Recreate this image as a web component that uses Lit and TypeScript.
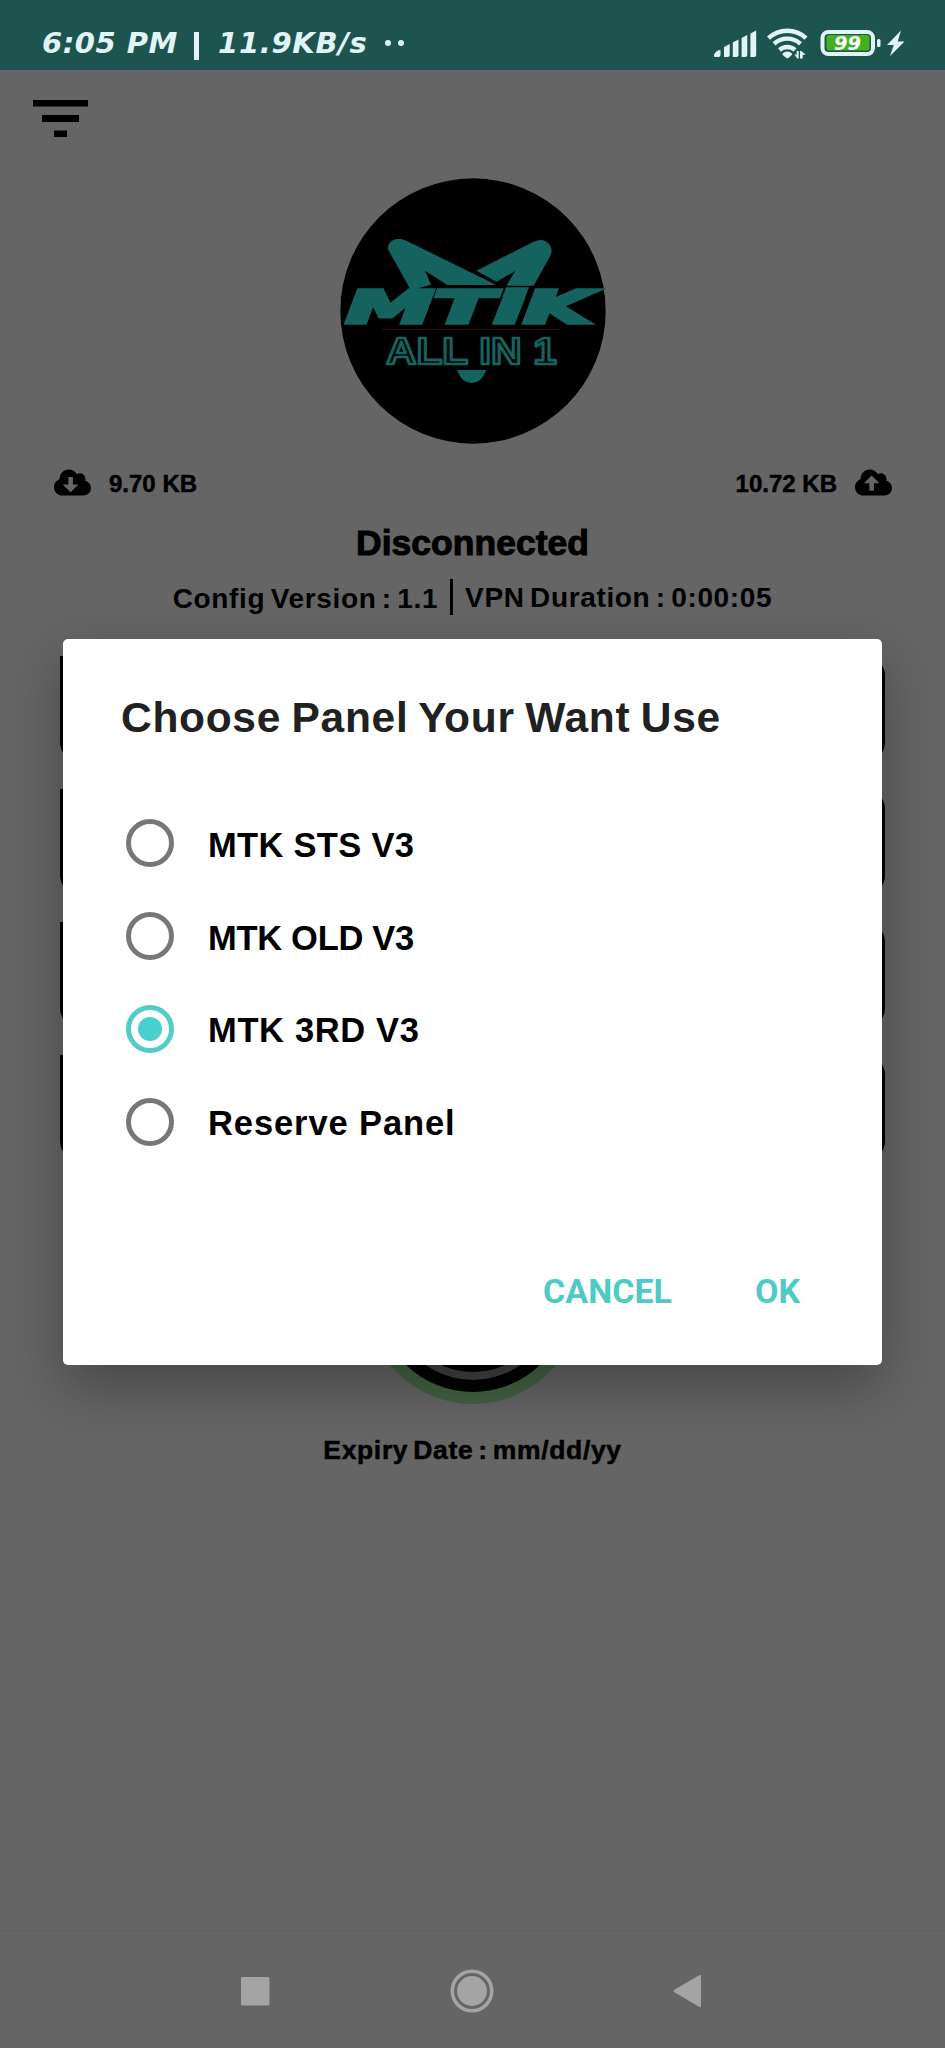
import { LitElement, css, html, svg } from 'lit';
import { customElement, property, state } from 'lit/decorators.js';
import { classMap } from 'lit/directives/class-map.js';

/**
 * Phone status bar.
 */
@customElement('status-bar')
export class StatusBar extends LitElement {
  @property() time = '';
  @property() speed = '';
  @property({ type: Number }) battery = 0;

  render() {
    return html`
      <span class="time">${this.time}</span>
      <span class="bar"></span>
      <span class="speed">${this.speed}</span>
      <span class="dot"></span>
      <span class="dot"></span>
      <svg class="icons" width="195" height="34" viewBox="0 0 195 34">
        <!-- signal -->
        <path
          d="M4 31v-2q2-5 6.500-5v5q0 2-2 2zM14 31V21l5.700-3v11q0 2-2 2zM22.800 31V16.500l5.700-3V29q0 2-2 2zM31.600 31V12l5.700-3v20q0 2-2 2zM40.400 31V7.500l5.800-3V29q0 2-2 2z"
        />
        <!-- wifi -->
        <g class="arcs">
          <path d="M58.500 12.200a27.500 27.500 0 0 1 37.500 0" />
          <path d="M64 17.800a19.500 19.500 0 0 1 26.500 0" />
          <path d="M69.500 24a11.500 11.500 0 0 1 15.500 0" />
        </g>
        <path d="M72.500 27.500q4.800-4 9.600 0 .500 1.500-4.800 5-5.300-3.500-4.800-5z" />
        <path
          d="M84.500 28.500h2.200V25h2v7.600h-1.500zM90 32.500v-7.600h1.500l4.200 3.800h-3v3.800z"
        />
        <!-- battery -->
        <rect class="case" x="112.500" y="6" width="50.500" height="22" rx="6" />
        <rect class="charge" x="116.500" y="9" width="43" height="15.500" rx="2.500" />
        <text
          class="level"
          x="124"
          y="23.500"
          textLength="27"
          lengthAdjust="spacingAndGlyphs"
        >${this.battery}</text>
        <rect x="167" y="13" width="3.500" height="8" rx="1.500" />
        <path d="M191 4.500L177 19h6.800L180 30l14.500-14.500h-6.800z" />
      </svg>
    `;
  }

  static styles = css`
    :host {
      display: flex;
      align-items: center;
      box-sizing: border-box;
      height: 70px;
      padding: 16px 41px 0 42px;
      background: #1e5450;
      color: #e2f5f6;
      font: italic bold 29px/34px 'DejaVu Sans', sans-serif;
      white-space: nowrap;
    }

    .time {
      width: 152px;
      letter-spacing: 0.5px;
    }

    .bar {
      width: 5px;
      height: 28px;
      margin: 6px 19px 0 0;
      background: currentColor;
    }

    .speed {
      width: 167px;
      letter-spacing: 0.7px;
    }

    .dot {
      width: 6px;
      height: 6px;
      margin-right: 7px;
      border-radius: 50%;
      background: currentColor;
    }

    .icons {
      flex: none;
      margin-left: auto;
      margin-right: -1px;
      fill: #e2f5f6;
    }

    .arcs {
      fill: none;
      stroke: #e2f5f6;
      stroke-width: 4.4;
    }

    .case {
      fill: none;
      stroke: #e2f5f6;
      stroke-width: 4;
    }

    .charge {
      fill: #43b11c;
    }

    .level {
      fill: #fff;
      font: italic bold 19px 'DejaVu Sans', sans-serif;
    }
  `;
}

/**
 * Round app logo.
 */
@customElement('app-logo')
export class AppLogo extends LitElement {
  render() {
    return html`
      <svg width="266" height="266" viewBox="28 24 798 798">
        <circle cx="427" cy="423" r="398" />
        <g class="fox">
          <path
            d="M172 238q-2-28 31-32 12 0 24 6l270 133H350l-67-43 18 42-34 10-22 14z"
          />
          <path
            d="M437 302l172-87q32-14 50 12 8 14 0 30l-50 90h-82l27-44-56 32z"
          />
          <path d="M379 600h88q-14 39-44 39t-44-39z" />
        </g>
        <text class="name" x="46" y="460" textLength="738" lengthAdjust="spacingAndGlyphs">
          MTiK
        </text>
        <path class="rule" d="M155 478H688" />
        <text class="sub" x="166" y="581" textLength="512" lengthAdjust="spacingAndGlyphs">
          ALL IN 1
        </text>
      </svg>
    `;
  }

  static styles = css`
    :host,
    svg {
      display: block;
    }

    .fox {
      fill: #14635f;
    }

    .name {
      fill: #14635f;
      stroke: #14635f;
      stroke-width: 11;
      font: italic bold 133px 'DejaVu Sans', sans-serif;
    }

    .rule {
      stroke: #35110e;
      stroke-width: 3;
    }

    .sub {
      fill: #000;
      stroke: #14635f;
      stroke-width: 8;
      stroke-linejoin: round;
      font: bold 112px 'Liberation Sans', sans-serif;
    }
  `;
}

const cloud =
  'M537.600 226.600c4.100-10.700 6.400-22.400 6.400-34.600 0-53-43-96-96-96-19.700 0-38.100 6-53.300 16.200C367 64.200 315.300 32 256 32c-88.400 0-160 71.600-160 160 0 2.700.1 5.400.2 8.100C40.200 219.800 0 273.200 0 336c0 79.500 64.500 144 144 144h368c70.700 0 128-57.300 128-128 0-61.900-44-113.600-102.400-125.400z';

const arrows = {
  down: svg`<path class="arrow" d="M248 160h80v132h96L288 424 152 292h96z" />`,
  up: svg`<path class="arrow" d="M248 400h80V268h96L288 136 152 268h96z" />`,
};

@customElement('app-root')
export class AppRoot extends LitElement {
  @state() private _selected = 2;

  // Letter spacing in px goes with each label.
  private _panels = [
    { label: 'MTK STS V3', spacing: 0.3 },
    { label: 'MTK OLD V3', spacing: -0.3 },
    { label: 'MTK 3RD V3', spacing: 0.65 },
    { label: 'Reserve Panel', spacing: 0.9 },
  ];

  // Cloud icon for the traffic counters.
  private _cloud(direction: 'down' | 'up') {
    return html`
      <svg class="cloud" width="37" height="27" viewBox="0 32 640 448">
        <path d=${cloud} />
        ${arrows[direction]}
      </svg>
    `;
  }

  private _renderDialog() {
    return html`
      <div class="dialog" role="dialog">
        <h1 class="title">Choose Panel Your Want Use</h1>
        <div class="options">
          ${this._panels.map(
            (panel, i) => html`
              <div class="option" @click=${() => (this._selected = i)}>
                <span
                  class=${classMap({ radio: true, checked: i === this._selected })}
                ></span>
                <span style="letter-spacing: ${panel.spacing}px">${panel.label}</span>
              </div>
            `,
          )}
        </div>
        <div class="actions">
          <span>CANCEL</span>
          <span>OK</span>
        </div>
      </div>
    `;
  }

  render() {
    return html`
      <status-bar time="6:05 PM" speed="11.9KB/s" battery="99"></status-bar>
      <main class="content">
        <svg class="menu" width="55" height="38" viewBox="0 0 55 38">
          <path d="M0 0h55v6.500H0zM9 15h37v7H9zM21 30.500h13V37H21z" />
        </svg>
        <app-logo class="logo"></app-logo>
        <div class="traffic">
          ${this._cloud('down')}
          <span>9.70 KB</span>
          <span class="sent">10.72 KB</span>
          ${this._cloud('up')}
        </div>
        <div class="status">Disconnected</div>
        <div class="info">
          <span class="version">Config Version : 1.1</span>
          <span class="duration">VPN Duration : 0:00:05</span>
        </div>
        <div class="fields">
          ${this._panels.map(() => html`<div class="field"></div>`)}
        </div>
        <div class="power"><div class="power-inner"></div></div>
        <div class="expiry">Expiry Date : mm/dd/yy</div>
      </main>
      <nav class="nav">
        <svg width="29" height="29" viewBox="0 0 29 29">
          <rect width="28.500" height="28.500" rx="1.500" />
        </svg>
        <svg width="44" height="44" viewBox="0 0 44 44">
          <circle class="ring" cx="22" cy="22" r="19.700" />
          <circle cx="22" cy="22" r="15" />
        </svg>
        <svg width="29" height="34" viewBox="0 0 29 34">
          <path d="M1 16q-1 1 0 2l25.500 15q1.500.5 1.500-1V2q0-1.500-1.500-1z" />
        </svg>
      </nav>
      ${this._renderDialog()}
    `;
  }

  static styles = css`
    :host {
      display: flex;
      flex-direction: column;
      position: relative;
      width: 945px;
      height: 2048px;
      overflow: hidden;
      background: #656565;
      color: #000;
      font-family: 'Liberation Sans', Arial, sans-serif;
      font-weight: bold;
      white-space: nowrap;
    }

    .content {
      flex: 1;
      display: flex;
      flex-direction: column;
      align-items: center;
    }

    .menu {
      align-self: flex-start;
      margin: 30px 0 0 33px;
    }

    .logo {
      margin-top: 40px;
    }

    .traffic {
      align-self: stretch;
      display: flex;
      align-items: center;
      gap: 18px;
      height: 30px;
      padding: 0 53px 0 54px;
      margin-top: 23px;
      font-size: 24px;
      -webkit-text-stroke: 0.5px #000;
    }

    .traffic span {
      padding-top: 3px;
    }

    .sent {
      margin-left: auto;
    }

    .cloud .arrow {
      fill: #656565;
    }

    .status {
      margin-top: 25px;
      font-size: 35.5px;
      line-height: 42px;
      -webkit-text-stroke: 1px #000;
    }

    .info {
      display: flex;
      align-items: center;
      height: 36px;
      margin-top: 15px;
      font-size: 28px;
      word-spacing: -3px;
    }

    .version {
      padding: 3px 12px 0 0;
      letter-spacing: 0.65px;
    }

    .duration {
      padding: 3px 0 1px 12px;
      border-left: 3px solid #000;
      letter-spacing: 0.65px;
    }

    .fields {
      display: flex;
      flex-direction: column;
      gap: 27px;
      width: 825px;
      margin-top: 41px;
    }

    .field {
      height: 106px;
      box-sizing: border-box;
      border: 3px solid #000;
      border-radius: 0 20px 20px 20px;
    }

    .power {
      box-sizing: border-box;
      width: 216px;
      height: 216px;
      margin-top: 27px;
      padding: 12px;
      border-radius: 50%;
      background: #436143;
    }

    .power-inner {
      box-sizing: border-box;
      height: 192px;
      border: 12px solid #000;
      border-radius: 50%;
      background: #000;
      box-shadow: inset 0 0 0 8px #404040;
    }

    .expiry {
      margin-top: 31px;
      font-size: 26.5px;
      line-height: 30px;
      letter-spacing: 0.65px;
      word-spacing: -3px;
      -webkit-text-stroke: 0.5px #000;
    }

    .nav {
      display: flex;
      align-items: center;
      justify-content: space-between;
      box-sizing: border-box;
      height: 118px;
      padding: 3px 243px 0 241px;
      border-top: 1px solid #616161;
      fill: #a4a4a4;
    }

    .ring {
      fill: none;
      stroke: #a4a4a4;
      stroke-width: 3.6;
    }

    .dialog {
      position: absolute;
      top: 639px;
      left: 63px;
      box-sizing: border-box;
      width: 819px;
      height: 726px;
      padding: 53px 58px 0;
      border-radius: 5px;
      background: #fff;
      box-shadow: 0 22px 56px rgba(0, 0, 0, 0.3);
    }

    .title {
      margin: 0;
      color: #212121;
      font-size: 42.5px;
      line-height: 52px;
      letter-spacing: 0.7px;
      word-spacing: -2px;
    }

    .options {
      margin-top: 53px;
      font-size: 34.5px;
    }

    .option {
      display: flex;
      align-items: center;
      gap: 34px;
      height: 92.8px;
      padding-left: 5px;
    }

    .option span:last-child {
      padding-top: 4px;
    }

    .radio {
      display: grid;
      place-items: center;
      box-sizing: border-box;
      width: 48px;
      height: 48px;
      border: 5px solid #777;
      border-radius: 50%;
    }

    .checked {
      border-color: #55cbc5;
    }

    .checked::after {
      content: '';
      width: 24px;
      height: 24px;
      border-radius: 50%;
      background: #48d1cc;
    }

    .actions {
      display: flex;
      justify-content: flex-end;
      gap: 83px;
      margin-top: 103px;
      padding-right: 24px;
      color: #50cac5;
      font: bold 34px/40px Roboto, sans-serif;
    }
  `;
}
